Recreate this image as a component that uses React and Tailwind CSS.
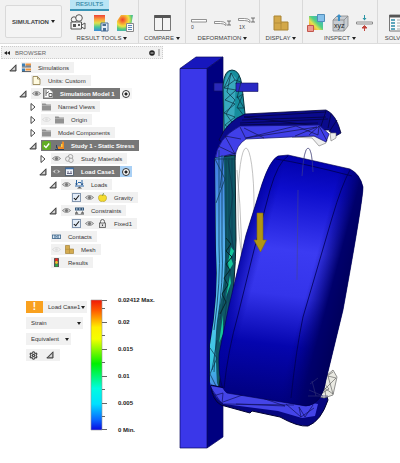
import { Settings } from 'lucide-react';
import { clsx } from 'clsx';

const TREE = [
  { label: 'Simulations', indent: 'pl-[9px]', open: true, icons: ['stack'] },
  { label: 'Units: Custom', indent: 'pl-[19px]', icons: ['doc'] },
  { label: 'Simulation Model 1', indent: 'pl-[19px]', open: true, lead: 'eye', icons: ['model'], dark: true, radio: true },
  { label: 'Named Views', indent: 'pl-[29px]', open: false, icons: ['folder'] },
  { label: 'Origin', indent: 'pl-[29px]', open: false, icons: ['eyeOff', 'folder'] },
  { label: 'Model Components', indent: 'pl-[29px]', open: false, icons: ['folder'] },
  { label: 'Study 1 - Static Stress', indent: 'pl-[29px]', open: true, icons: ['ok', 'study'], dark: true },
  { label: 'Study Materials', indent: 'pl-[39px]', open: false, icons: ['eye', 'materials'] },
  { label: 'Load Case1', indent: 'pl-[39px]', open: true, icons: ['eye', 'loadCase'], dark: true, radio: true, active: true },
  { label: 'Loads', indent: 'pl-[49px]', open: true, icons: ['eye', 'loads'] },
  { label: 'Gravity', indent: 'pl-[59px]', check: true, icons: ['eye', 'apple'] },
  { label: 'Constraints', indent: 'pl-[49px]', open: true, icons: ['eye', 'constraints'] },
  { label: 'Fixed1', indent: 'pl-[59px]', check: true, icons: ['eye', 'lock'] },
  { label: 'Contacts', indent: 'pl-[39px]', icons: ['contacts'] },
  { label: 'Mesh', indent: 'pl-[39px]', icons: ['eyeOff', 'mesh'] },
  { label: 'Results', indent: 'pl-[39px]', icons: ['results'] },
];

const SCALE = ['0.02412 Max.', '0.02', '0.015', '0.01', '0.005', '0 Min.'];

const GLYPHS = {
  stack: (
    <>
      <path d="M0 .5h3v3H0zM0 5.5h3v3H0z" fill="#3d7fb5" />
      <path d="M3.5 .5H9v2H3.5zM3.5 5.5H9v2H3.5z" fill="#ee9540" />
      <path d="M0 4h9M0 8.5h9M3.5 3H9" stroke="#3c4650" strokeWidth=".8" />
    </>
  ),
  doc: <path d="M1 .5h4.5l2.500 2.500v5.500H1zM5.500 .5V3H8" fill="#fffbe0" stroke="#8c7a45" strokeWidth=".8" />,
  model: (
    <>
      <path d="M.5 .5h5L8.500 3v5.500h-8z" fill="#fff" stroke="#bbb" strokeWidth=".7" />
      <path d="M2 1v6M2 4.500l3-2M5 4.500h3v3H5z" stroke="#555" fill="none" strokeWidth=".9" />
    </>
  ),
  folder: (
    <>
      <path d="M0 1.500h3.500l1 1H9v6H0z" fill="#929292" />
      <path d="M0 3.500h9" stroke="#c2c2c2" strokeWidth=".6" />
    </>
  ),
  eye: (
    <>
      <path d="M.4 4.500Q4.500 .5 8.600 4.500 4.500 8.500 .4 4.500z" fill="#d9d9d9" stroke="#777" strokeWidth=".8" />
      <circle cx="4.500" cy="4.500" r="1.600" fill="#777" />
    </>
  ),
  eyeOff: (
    <>
      <path d="M.4 4.500Q4.500 .5 8.600 4.500 4.500 8.500 .4 4.500z" fill="none" stroke="#d4d4d4" strokeWidth=".7" />
      <circle cx="4.500" cy="4.500" r="1.300" fill="#dcdcdc" />
    </>
  ),
  ok: (
    <>
      <rect width="9" height="9" rx="2" fill="#62ad25" />
      <path d="M2 4.500l2 2 3.200-4" fill="none" stroke="#fff" strokeWidth="1.400" />
    </>
  ),
  study: (
    <>
      <path d="M3 5.500h3L7.500 0 9 1v7.500H3z" fill="#ee8b25" />
      <path d="M0 8.500h9M1 6l2 1.500M1.500 4v2" stroke="#2c3e60" strokeWidth="1" />
      <path d="M6 3h1.500v3H6z" fill="#f7d14b" />
    </>
  ),
  materials: (
    <g fill="#eee" stroke="#888" strokeWidth=".7">
      <circle cx="5.500" cy="2.800" r="2.300" />
      <circle cx="2.800" cy="5" r="2.300" />
      <circle cx="6" cy="6.300" r="2.200" />
    </g>
  ),
  loadCase: (
    <>
      <rect x=".5" y="1" width="8" height="7.500" fill="#eef2f8" stroke="#456" strokeWidth=".8" />
      <path d="M.5 1.500h8" stroke="#3b6da8" strokeWidth="1.500" />
      <path d="M2 6.500h5M3 4v2M6 4v2" stroke="#446" strokeWidth=".8" />
    </>
  ),
  loads: (
    <>
      <path d="M0 6h9M1.500 0v5M7 0v5M3 2.500h3" stroke="#2a67a8" strokeWidth="1" />
      <path d="M0 3.500h3L1.500 5.500zM5.500 3.500h3L7 5.500z" fill="#1d4f87" />
      <path d="M2 8.500l2.500-2 2.500 2z" fill="#555" />
    </>
  ),
  apple: (
    <>
      <path d="M4.500 2.500C1.500 1 .3 3.200 .5 5 .8 7.800 2.500 9 4.500 8.300 6.500 9 8.400 7.800 8.500 5 8.600 3 7 1.300 4.500 2.500z" fill="#f5dc2f" stroke="#b09a20" strokeWidth=".6" />
      <path d="M4.500 2.500L5.500 .3" stroke="#6a8b2a" />
    </>
  ),
  constraints: (
    <>
      <path d="M0 1.500h9v3H0z" fill="#34587c" />
      <path d="M1 3h1.500M4 3h1.500M7 3h1" stroke="#dce9f5" />
      <path d="M0 7.500l1.500-2L3 7.500zM6 7.500l1.500-2L9 7.500zM0 8.500h9" fill="#666" stroke="#666" strokeWidth=".6" />
    </>
  ),
  lock: (
    <>
      <path d="M2.500 4V2.500a2 2 0 014 0V4" fill="none" stroke="#666" />
      <rect x="1.500" y="4" width="6" height="4.500" fill="#ddd" stroke="#555" strokeWidth=".8" />
      <path d="M4.500 5.500v1.500" stroke="#444" />
    </>
  ),
  contacts: (
    <>
      <rect x=".4" y="3" width="8.200" height="3.500" fill="#dbe9f6" stroke="#3c6489" strokeWidth=".8" />
      <path d="M3 3v3.500M6 3v3.500M4 4.800h1" stroke="#27527c" strokeWidth=".9" />
    </>
  ),
  mesh: (
    <>
      <path d="M.5 .5h4V4h4v4.500h-8z" fill="#d4ab50" stroke="#9c7727" strokeWidth=".6" />
      <path d="M.5 4.300h4v4" fill="none" stroke="#a5802f" strokeWidth=".5" />
    </>
  ),
  results: (
    <>
      <rect x="2" width="5" height="9" rx=".5" fill="#555" />
      <circle cx="4.500" cy="1.700" r="1.500" fill="#ea2b20" />
      <circle cx="4.500" cy="4.500" r="1.400" fill="#f6c62e" />
      <circle cx="4.500" cy="7.300" r="1.500" fill="#2fa644" />
    </>
  ),
};

function Glyph({ name }) {
  return (
    <svg viewBox="0 0 9 9" className="size-[9px] shrink-0" aria-hidden="true">
      {GLYPHS[name]}
    </svg>
  );
}

function Caret() {
  return (
    <svg viewBox="0 0 4 3" className="h-[3px] w-1 shrink-0" aria-hidden="true">
      <path d="M0 0h4L2 3z" fill="#222" />
    </svg>
  );
}

function Toggle({ open, label }) {
  return (
    <button type="button" aria-label={`Toggle ${label}`} aria-expanded={open} className="shrink-0">
      <svg viewBox="0 0 8 8" className="size-2">
        {open ? (
          <>
            <path d="M7 .8V7H.8z" fill="#999" stroke="#333" strokeWidth=".9" />
            <path d="M5.800 3.500v2.300H3.500z" fill="#eee" />
          </>
        ) : (
          <path d="M2 .5L6 4 2 7.500z" fill="#fff" stroke="#333" strokeWidth=".9" />
        )}
      </svg>
    </button>
  );
}

function TreeRow({ item }) {
  return (
    <li className={clsx('flex h-[13px] items-center', item.indent)}>
      <span className="flex w-3 shrink-0 items-center">
        {item.open !== undefined && <Toggle open={item.open} label={item.label} />}
      </span>
      {item.lead && (
        <span className="flex h-[11px] w-3 items-center bg-[#f1f1f1] pl-px">
          <Glyph name={item.lead} />
        </span>
      )}
      <label
        className={clsx(
          'flex h-[11px] items-center gap-1 whitespace-nowrap pl-px pr-[5px]',
          item.dark ? 'bg-[#777] font-bold text-white' : 'bg-[#f1f1f1] text-[#333]',
        )}
      >
        {item.check && (
          <input
            type="checkbox"
            defaultChecked
            className="size-[9px] shrink-0 appearance-none border border-[#8296b0] bg-[#e4edf8] bg-[linear-gradient(135deg,transparent_40%,#222_40%,#222_60%,transparent_60%)] [clip-path:inset(0)] checked:bg-none checked:after:block checked:after:h-[6px] checked:after:w-[3px] checked:after:translate-x-[2px] checked:after:rotate-[38deg] checked:after:border-b checked:after:border-r checked:after:border-[#111] checked:after:content-['']"
          />
        )}
        {item.icons.map((name) => (
          <Glyph key={name} name={name} />
        ))}
        <span className="pl-[3px]">{item.label}</span>
      </label>
      {item.radio && (
        <span className={clsx('flex h-[11px] items-center px-[2px]', item.active ? 'bg-[#a9d0f5]' : 'bg-[#f6f6f6]')}>
          <input
            type="radio"
            name={item.label}
            defaultChecked
            aria-label={`Activate ${item.label}`}
            className="size-2 appearance-none rounded-full border border-[#333] bg-white bg-[radial-gradient(circle,#222_1px,transparent_2px)]"
          />
        </span>
      )}
    </li>
  );
}

function ToolGroup({ label, tab, className, children }) {
  return (
    <section className={clsx('flex shrink-0 flex-col items-center border-r border-[#d9d9d9]', className)}>
      {tab ? (
        <button type="button" className="h-[11px] w-[39px] self-start border-b-2 border-[#3a94b5] bg-[#b9e5f5] font-bold leading-[9px] text-[#4592ae] ml-1">
          {tab}
        </button>
      ) : (
        <span className="h-[11px]" />
      )}
      <div className="mt-[2px] flex h-5 items-center gap-[7px]">{children}</div>
      <button type="button" className="mt-px flex h-2 items-center gap-[2px] whitespace-nowrap">
        {label}
        <Caret />
      </button>
    </section>
  );
}

function Toolbar() {
  return (
    <header className="flex h-11 overflow-hidden border-b border-[#dcdcdc] bg-[#f1f1f1] text-[6px] leading-2 text-[#444]">
      <button type="button" className="ml-[5px] mr-1 mt-[5px] flex h-[33px] w-[57px] shrink-0 items-center justify-center gap-[2px] rounded-[2px] border border-[#d9d9d9] bg-[#f4f4f4] font-bold">
        SIMULATION
        <Caret />
      </button>

      <ToolGroup label="RESULT TOOLS" tab="RESULTS" className="w-[73px]">
        <svg viewBox="0 0 16 18" className="h-[18px] w-4">
          <g fill="#f5f5f5" stroke="#555">
            <circle cx="4" cy="5.500" r="2.700" />
            <circle cx="9" cy="4" r="3.300" />
            <path d="M1 8h10.500v7H1zM11.500 11l3.500-2v6l-3.500-2z" />
          </g>
          <path d="M3 10h3v3H3zM8 10h2v2H8z" fill="#555" />
        </svg>
        <svg viewBox="0 0 16 18" className="h-[18px] w-4">
          <defs>
            <linearGradient id="ramp" x2="0" y2="1">
              <stop stopColor="#ef4136" />
              <stop offset=".3" stopColor="#f8a83e" />
              <stop offset=".5" stopColor="#dde24b" />
              <stop offset=".75" stopColor="#48c89a" />
              <stop offset="1" stopColor="#3989d8" />
            </linearGradient>
          </defs>
          <path d="M1 1h11v16H1z" fill="url(#ramp)" />
          <path d="M8 9h7v8H8z" fill="#e6eef7" stroke="#4a6e96" />
          <path d="M9.500 10h3.500v2H9.500zM10 14h3v3h-3z" fill="#4a6e96" />
        </svg>
        <svg viewBox="0 0 18 18" className="size-[18px]">
          <defs>
            <radialGradient id="blob" cx=".35" cy=".3" r=".8">
              <stop stopColor="#ef3d2d" />
              <stop offset=".3" stopColor="#f7a233" />
              <stop offset=".5" stopColor="#f0e341" />
              <stop offset=".75" stopColor="#52c97d" />
              <stop offset="1" stopColor="#42a3d4" />
            </radialGradient>
          </defs>
          <path d="M5 1h12l-2 11-5 5H1V7z" fill="url(#blob)" />
          <path d="M10.500 9.500h7v8h-7z" fill="#fafafa" stroke="#888" />
          <path d="M12 11.500h4M12 13.500h4M12 15.500h4" stroke="#5a87b5" />
        </svg>
      </ToolGroup>

      <ToolGroup label="COMPARE" className="w-[47px]">
        <svg viewBox="0 0 17 18" className="h-[18px] w-[17px]">
          <path d="M.5 1.500h16v15H.5z" fill="#f4f4f4" stroke="#777" />
          <path d="M.5 1h16v3H.5z" fill="#555" />
          <path d="M8.500 4v12" stroke="#666" />
        </svg>
      </ToolGroup>

      <ToolGroup label="DEFORMATION" className="w-[74px]">
        <svg viewBox="0 0 16 18" className="h-[18px] w-4">
          <path d="M.5 5.500h15v2.500H.5z" fill="#fff" stroke="#777" strokeWidth=".8" />
          <text x="0" y="15" fontSize="5" fill="#444">0</text>
        </svg>
        <svg viewBox="0 0 17 18" className="h-[18px] w-[17px]">
          <path d="M.5 7.500h6q4 0 5.500 2v2q-2-2-5.500-2h-6z" fill="#fff" stroke="#777" strokeWidth=".8" />
          <path d="M13 7h4M13 11h4M15 7v4" stroke="#555" strokeWidth=".8" />
        </svg>
        <svg viewBox="0 0 17 18" className="h-[18px] w-[17px]">
          <path d="M.5 4.500h6q4 0 5.500 2v2q-2-2-5.500-2h-6z" fill="#fff" stroke="#777" strokeWidth=".8" />
          <path d="M13 4h4M13 8h4M15 4v4" stroke="#555" strokeWidth=".8" />
          <text x="1" y="15" fontSize="5" fill="#444">1X</text>
        </svg>
      </ToolGroup>

      <ToolGroup label="DISPLAY" className="w-[43px]">
        <svg viewBox="0 0 16 18" className="h-[18px] w-4">
          <path d="M1 2h7v6h7v8H1z" fill="#d3a84a" stroke="#aa8432" />
          <path d="M1 9h7v7M8 8v2" fill="none" stroke="#b48d3a" />
        </svg>
      </ToolGroup>

      <ToolGroup label="INSPECT" className="w-[75px]">
        <svg viewBox="0 0 18 18" className="size-[18px]">
          <defs>
            <linearGradient id="probe" x1="0" y1="1" x2="1" y2="0">
              <stop stopColor="#ef5a3a" />
              <stop offset=".35" stopColor="#ece04a" />
              <stop offset=".55" stopColor="#50cf86" />
              <stop offset="1" stopColor="#31a4e6" />
            </linearGradient>
          </defs>
          <path d="M2 2h14v14H2z" fill="url(#probe)" />
          <path d="M10.500 .5h7v7h-7z" fill="#85c0ea" stroke="#528db9" />
          <path d="M.5 11.500h6v6h-6z" fill="#ee9a90" stroke="#c2564e" />
        </svg>
        <svg viewBox="0 0 17 18" className="h-[18px] w-[17px]">
          <path d="M1 6l4-4h11v10l-4 5H1z" fill="#c6ccd2" stroke="#888" strokeWidth=".8" />
          <path d="M1 6h11v11M12 6l4-4" fill="none" stroke="#888" strokeWidth=".8" />
          <path d="M6 7V3H4.500L7 0l2.500 3H8v4z" fill="#3b8fc6" />
          <text x="2" y="14" fontSize="7" fill="#222">xyz</text>
        </svg>
        <svg viewBox="0 0 17 18" className="h-[18px] w-[17px]">
          <path d="M.5 8h16v2H.5z" fill="#eee" stroke="#777" strokeWidth=".8" />
          <path d="M8.500 1v3" stroke="#2b95a5" />
          <path d="M6.500 4h4l-2 2.500z" fill="#2b95a5" />
          <path d="M6 14l2.500-2.500L11 14zM8.500 13v4" fill="#c2453c" stroke="#c2453c" />
        </svg>
      </ToolGroup>

      <ToolGroup label="SOLVE" className="w-10">
        <svg viewBox="0 0 18 18" className="size-[18px]">
          <path d="M.5 1h17v16H.5z" fill="#fafafa" stroke="#777" />
          <path d="M.5 1h17v2.500H.5z" fill="#555" />
          <path d="M2 6h4M2 9h4M2 12h4M2 15h4" stroke="#2e8aa8" strokeWidth="1.500" />
          <path d="M8 6h8M8 9h8M8 12h8M8 15h8" stroke="#aaa" />
        </svg>
      </ToolGroup>
    </header>
  );
}

function BrowserTree() {
  return (
    <nav aria-label="Browser">
      <div className="mx-px mt-[2px] flex h-[13px] items-center border border-dotted border-[#ccc] bg-[#f1f1f1] px-[2px] text-[#666]">
        <button type="button" aria-label="Collapse browser" className="mr-[5px]">
          <svg viewBox="0 0 6 4" className="h-1 w-[6px]">
            <path d="M3 0v4L0 2zM6 0v4L3 2z" fill="#222" />
          </svg>
        </button>
        <h2>BROWSER</h2>
        <button type="button" aria-label="Browser options" className="ml-auto mr-[3px]">
          <svg viewBox="0 0 6 6" className="size-[6px]">
            <circle cx="3" cy="3" r="2.800" fill="#222" />
            <path d="M1.500 3h3" stroke="#fff" strokeWidth=".8" />
          </svg>
        </button>
        <span className="h-[7px] w-[2px] border-x border-[#bbb]" />
      </div>
      <ul className="mt-[2px]">
        {TREE.map((item) => (
          <TreeRow key={item.label} item={item} />
        ))}
      </ul>
    </nav>
  );
}

function Picker({ value, className }) {
  return (
    <span className={clsx('flex h-3 items-center bg-[#f1f1f1] pl-[5px] pr-[2px]', className)}>
      <select aria-label={value} className="min-w-0 grow appearance-none">
        <option>{value}</option>
      </select>
      <Caret />
    </span>
  );
}

function Legend() {
  return (
    <section className="mt-[27px] flex pl-[26px]">
      <div className="mt-[5px] flex w-[60px] flex-col gap-1 text-[#333]">
        <div className="flex">
          <span className="flex h-3 w-[17px] shrink-0 items-center justify-center bg-[#f9a11f] text-[10px] font-bold text-white">!</span>
          <Picker value="Load Case1" className="grow" />
        </div>
        <Picker value="Strain" className="w-[57px]" />
        <Picker value="Equivalent" className="w-[45px]" />
        <div className="flex h-3 w-[34px] items-center gap-2 bg-[#f1f1f1] pl-[3px]">
          <button type="button" aria-label="Legend settings">
            <Settings size={9} strokeWidth={3} color="#444" />
          </button>
          <button type="button" aria-label="Legend size">
            <svg viewBox="0 0 8 8" className="size-2">
              <path d="M7 .8V7H.8z" fill="#999" stroke="#333" strokeWidth=".9" />
              <path d="M5.800 3.500v2.300H3.500z" fill="#eee" />
            </svg>
          </button>
        </div>
      </div>
      <svg viewBox="0 0 17 132" className="ml-1 mt-[3px] h-[132px] w-[17px] shrink-0" aria-hidden="true">
        <defs>
          <linearGradient id="strain" x2="0" y2="1">
            <stop stopColor="#f01808" />
            <stop offset=".08" stopColor="#ff5a00" />
            <stop offset=".21" stopColor="#ffee00" />
            <stop offset=".3" stopColor="#f4ff00" />
            <stop offset=".49" stopColor="#00f000" />
            <stop offset=".68" stopColor="#00fce0" />
            <stop offset=".8" stopColor="#00e0ff" />
            <stop offset=".92" stopColor="#0868ff" />
            <stop offset="1" stopColor="#0808e0" />
          </linearGradient>
        </defs>
        <path d="M1 1h11v130H1z" fill="url(#strain)" stroke="#999" strokeWidth=".6" />
        <path d="M12 1.500h5M12 23.500h5M12 50.500h5M12 77.500h5M12 104.500h5M12 130.500h5M12 9.500h3M12 36.500h3M12 63.500h3M12 90.500h3M12 117.500h3" stroke="#666" />
      </svg>
      <ol className="ml-[11px] whitespace-nowrap font-bold leading-2 text-[#222]">
        {SCALE.map((value) => (
          <li key={value} className="h-[27px] first:h-[22px] last:h-2">{value}</li>
        ))}
      </ol>
    </section>
  );
}

function Model() {
  return (
    <svg viewBox="164 44 236 419" className="w-full" role="img" aria-label="Strain plot of wheel holder">
      <defs>
        <linearGradient id="tread" x1="300" y1="155" x2="270" y2="405" gradientUnits="userSpaceOnUse">
          <stop stopColor="#0000a8" />
          <stop offset=".14" stopColor="#0d0dcc" />
          <stop offset=".38" stopColor="#3b3bf2" />
          <stop offset=".56" stopColor="#3434ea" />
          <stop offset=".76" stopColor="#0505ae" />
          <stop offset="1" stopColor="#00007c" />
        </linearGradient>
        <linearGradient id="shade" x1="238" y1="270" x2="350" y2="300" gradientUnits="userSpaceOnUse">
          <stop stopColor="#0000a0" stopOpacity=".8" />
          <stop offset=".16" stopColor="#0000a0" stopOpacity="0" />
          <stop offset=".62" stopColor="#000080" stopOpacity="0" />
          <stop offset=".82" stopColor="#00006c" />
          <stop offset="1" stopColor="#000058" />
        </linearGradient>
        <linearGradient id="tube" x2="0" y2="1">
          <stop stopColor="#3f78e2" />
          <stop offset=".3" stopColor="#55aaf0" />
          <stop offset=".65" stopColor="#56bff0" />
          <stop offset=".85" stopColor="#38c8e0" />
          <stop offset="1" stopColor="#5272ee" />
        </linearGradient>
      </defs>

      {/* post */}
      <g stroke="#080860" strokeWidth=".7">
        <path d="M180 68.500L196 57h27l-16 11.500z" fill="#1717bd" />
        <path d="M207 68.500L223 57v380l-16 11z" fill="#000080" />
        <path d="M180 68.500h27V448h-27z" fill="#3a37e9" />
      </g>

      {/* undeformed outline */}
      <g fill="none" stroke="#999" strokeWidth=".6">
        <ellipse cx="246" cy="205" rx="8" ry="57" />
        <path d="M237 170Q244 240 240 290" />
        <path d="M302 176Q304 148 308 148T313 172" />
      </g>

      {/* hook and peg */}
      <path d="M214 83h9v8h-9z" fill="#2928b8" stroke="#10105c" strokeWidth=".6" />
      <path d="M224 134L223 86Q224 70 232 70T242 86L245 114 236 128z" fill="#168d9c" stroke="#0a3540" />
      <path d="M225 130L224 88Q225 74 230 72L236 78 234 125z" fill="#38a9bd" />
      <path d="M236 83h22v8.500h-22z" fill="#2928c4" stroke="#10105c" strokeWidth=".6" />
      <path d="M224 88l7-15 4 7-11 8 12 2-11 10 10 4-11 9 11 4-10 8 9 7M231 73l-4 19 8 8-9 14 8 11M235 80l6 2-4 16 6-4-6 14 7 0-7-12M238 108l6 8-8 7M239 76l-3 8" fill="none" stroke="#0a3040" strokeWidth=".7" />

      {/* upper arm */}
      <path d="M219 140Q227 121 245 114L326 110Q336 114 341 133L334 137 329 130 243 130 228 146z" fill="#0a0a8c" stroke="#050538" strokeWidth=".8" />
      <path d="M244 117l82-5M242 120l84-3M240 123l88-4M240 125l78-2M326 111l-5 15M331 114l-3 14M337 120l-8 12M244 117l74 9" fill="none" stroke="#040440" strokeWidth=".8" />
      <path d="M292 137l20 1 7 8 7-3 1-6-12-1zM330 133l6 0 0 5-5 3z" fill="#eee" stroke="#777" strokeWidth=".6" />
      <path d="M215 160Q217 138 240 126L319 125 329 134 326 142 314 136 246 139Q236 145 235 158L226 165z" fill="#403fe8" stroke="#10106c" strokeWidth=".7" />
      <path d="M240 127l6 12M218 146l17 8-10-18 16 3M216 158l20-5M246 138l71-11-22 9M246 138l50-12 22 9 1-9 8 15M264 138l-20-10M319 126l-10 9" fill="none" stroke="#12124c" strokeWidth=".7" />

      {/* back tube */}
      <path d="M215 158L235 155 236 240Q235 285 230 315L218 392 210 382 210 345Q219 295 216 250z" fill="#0f5966" stroke="#092029" />
      <path d="M215 158L224 156 225 240Q226 280 219 310 214 340 217 383L223 397 213 395 210 382 210 345Q219 295 216 250z" fill="url(#tube)" />
      <path d="M219 150v95Q221 280 214 330M222 155v90Q224 280 217 325L214 372M226 158v92Q228 285 220 320M229 158v155M232 158v100L224 325" fill="none" stroke="#0b3d58" strokeWidth=".8" />
      <path d="M214 159h22M215 159l10 20-9 24M224 156l-4 32M228 160l5 35-4 29 5 26M210 348l7 10-7 16 9 18M217 340l-5 30" fill="none" stroke="#0b344c" strokeWidth=".7" />
      <path d="M231 247l3 4-3 7 2 6-4 7-1-9zM230 275l1 8-5 14zM223 315l-4 28 4-9z" fill="#15c79b" />
      <path d="M226 238l5 6-5 7 6 6-6 7 4 6-6 8 4 7-6 9 4 8-6 12" fill="none" stroke="#05272b" />

      {/* lower arm */}
      <path d="M211 385Q212 400 221 405L250 413 252 411 280 417Q298 427 308 426 321 421 328 400L326 393 300 404z" fill="#06067e" stroke="#030330" />
      <path d="M211 386Q215 399 224 404L278 411 302 418 315 416 318 404 300 401 222 388z" fill="#4444e8" />
      <path d="M211 388l11 16 1-11-10 3M223 402l25-9 37 13-49-2M224 404l70 1M286 404l15 13-2-10 6 10 8-12M301 417l13-9" fill="none" stroke="#10105e" strokeWidth=".7" />
      <path d="M317 396L319 382 333 370 337 377 333 395 324 398z" fill="#e9e9e2" stroke="#666" strokeWidth=".7" />
      <path d="M319 384l14 10-5-18 8 2-17 17 10-6-8-9 12-8M323 379l3 18" fill="none" stroke="#555" strokeWidth=".6" />

      {/* wheel */}
      <path id="wheel" d="M278 156L288 155 350 169Q360 174 363 187 363 200 343 310L326 380Q322 405 306 406L227 393Q218 387 219 354L228 310 246 235 262 184Q270 160 278 156z" fill="url(#tread)" />
      <path d="M278 156L288 155 350 169Q360 174 363 187 363 200 343 310L326 380Q322 405 306 406L227 393Q218 387 219 354L228 310 246 235 262 184Q270 160 278 156z" fill="url(#shade)" stroke="#000048" strokeWidth=".6" />
      <path d="M288 156Q278 162 270 190L254 250 238 315Q228 350 224 388M350 170Q342 184 332 218L303 317Q296 350 291 398M276 159Q302 163 352 176" fill="none" stroke="#000050" strokeWidth=".8" />
      <path d="M298 190l-1 90M302 176Q304 148 308 148T313 172" fill="none" stroke="#44448c" strokeWidth=".6" />
      <path d="M310 384l8-6M309 390l14 6M308 396h20M312 381l4 15" stroke="#333377" strokeWidth=".6" />

      {/* gravity arrow */}
      <path d="M257 213h6v27h3.500l-6 12-6.500-12h3z" fill="#b19512" stroke="#806a10" strokeWidth=".6" />
    </svg>
  );
}

export default function App() {
  return (
    <div className="min-h-screen overflow-hidden bg-white font-['Liberation_Sans_Narrow','Liberation_Sans',sans-serif] text-[6px] leading-2">
      <Toolbar />
      <main className="flex items-start">
        <aside className="w-[164px] shrink-0">
          <BrowserTree />
          <Legend />
        </aside>
        <div className="min-w-0 grow">
          <Model />
        </div>
      </main>
    </div>
  );
}
